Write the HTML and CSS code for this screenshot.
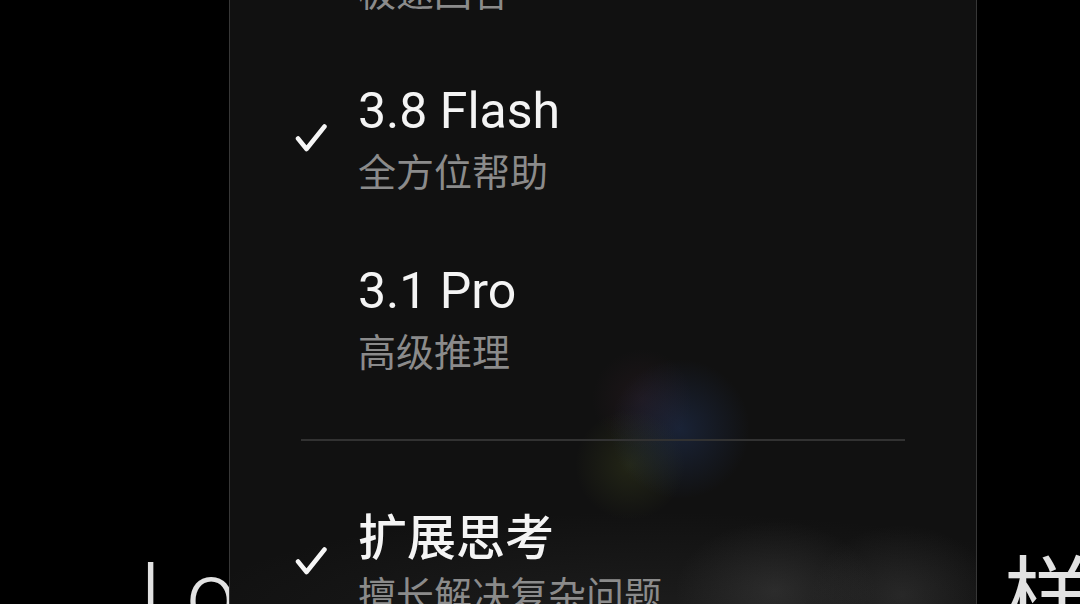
FILE: index.html
```html
<!DOCTYPE html>
<html lang="zh-CN">
<head>
  <meta charset="UTF-8" />
  <meta name="viewport" content="width=device-width, initial-scale=1.0"/>
  <title>模型选择</title>
  <link rel="stylesheet" href="styles.css">
</head>
<body>
  <div class="backdrop">
    <span class="bg-text">Lo</span>
    <span class="bg-text bg-cjk">样</span>
  </div>

  <div class="menu">
    <div class="item">
      <span class="mark"></span>
      <div class="label">
        <div class="title">3.8 Flash-Lite</div>
        <div class="sub">极速回答</div>
      </div>
    </div>

    <div class="item">
      <span class="mark">
        <svg width="32" height="30" viewBox="0 0 32 30"><path d="M3 15.5 L11.5 26 L29.5 3.5" /></svg>
      </span>
      <div class="label">
        <div class="title">3.8 Flash</div>
        <div class="sub">全方位帮助</div>
      </div>
    </div>

    <div class="item">
      <span class="mark"></span>
      <div class="label">
        <div class="title">3.1 Pro</div>
        <div class="sub">高级推理</div>
      </div>
    </div>

    <div class="divider"></div>

    <div class="item">
      <span class="mark">
        <svg width="32" height="30" viewBox="0 0 32 30"><path d="M3 15.5 L11.5 26 L29.5 3.5" /></svg>
      </span>
      <div class="label">
        <div class="title cjk">扩展思考</div>
        <div class="sub">擅长解决复杂问题</div>
      </div>
    </div>
  </div>
</body>
</html>
```

FILE: styles.css
```css
* {
  margin: 0;
  padding: 0;
  box-sizing: border-box;
}
body {
  position: relative;
  height: 604px;
  overflow: hidden;
  background-color: #000;
  font-family: Roboto, "Noto Sans CJK SC", sans-serif;
}
.backdrop {
  display: flex;
  padding: 550px 0 0 140px;
}
.bg-text {
  font-size: 88px;
  line-height: 88px;
  font-weight: 300;
  color: #e2e2e2;
  white-space: nowrap;
}
.bg-cjk {
  margin-left: 768px;
  padding-top: 5px;
  font-size: 88px;
  font-weight: 400;
}
.menu {
  position: absolute;
  top: -134px;
  left: 229px;
  width: 748px;
  border: 1px solid #373737;
  border-radius: 48px;
  background-color: #111;
  background-image:
    radial-gradient(circle at 450px 562px, rgba(50, 85, 160, 0.26), rgba(50, 85, 160, 0) 70px),
    radial-gradient(circle at 400px 598px, rgba(115, 130, 45, 0.18), rgba(115, 130, 45, 0) 55px),
    radial-gradient(circle at 412px 532px, rgba(120, 55, 85, 0.12), rgba(120, 55, 85, 0) 50px),
    radial-gradient(ellipse 100px 70px at 545px 724px, rgba(120, 120, 120, 0.2), rgba(120, 120, 120, 0)),
    radial-gradient(ellipse 90px 70px at 672px 728px, rgba(120, 120, 120, 0.18), rgba(120, 120, 120, 0)),
    radial-gradient(ellipse 460px 100px at 420px 745px, rgba(90, 90, 90, 0.16), rgba(90, 90, 90, 0));
}
.item {
  display: flex;
  align-items: center;
  padding: 36px 0 34px;
}
.mark {
  flex: none;
  width: 128px;
  padding-left: 65px;
  display: flex;
  align-items: center;
}
.mark svg path {
  fill: none;
  stroke: #f6f6f6;
  stroke-width: 4.5;
  stroke-linecap: round;
  stroke-linejoin: round;
}
.title {
  font-size: 50px;
  line-height: 56px;
  color: #f4f4f4;
}
.title.cjk {
  font-family: "Noto Sans CJK SC", sans-serif;
  font-size: 49px;
  font-weight: 500;
}
.sub {
  margin-top: 8px;
  font-family: "Noto Sans CJK SC", sans-serif;
  font-size: 38px;
  line-height: 46px;
  color: #8b8b8b;
}
.divider {
  height: 2px;
  margin: 32px 71px 29px;
  background-color: #323232;
}
```
